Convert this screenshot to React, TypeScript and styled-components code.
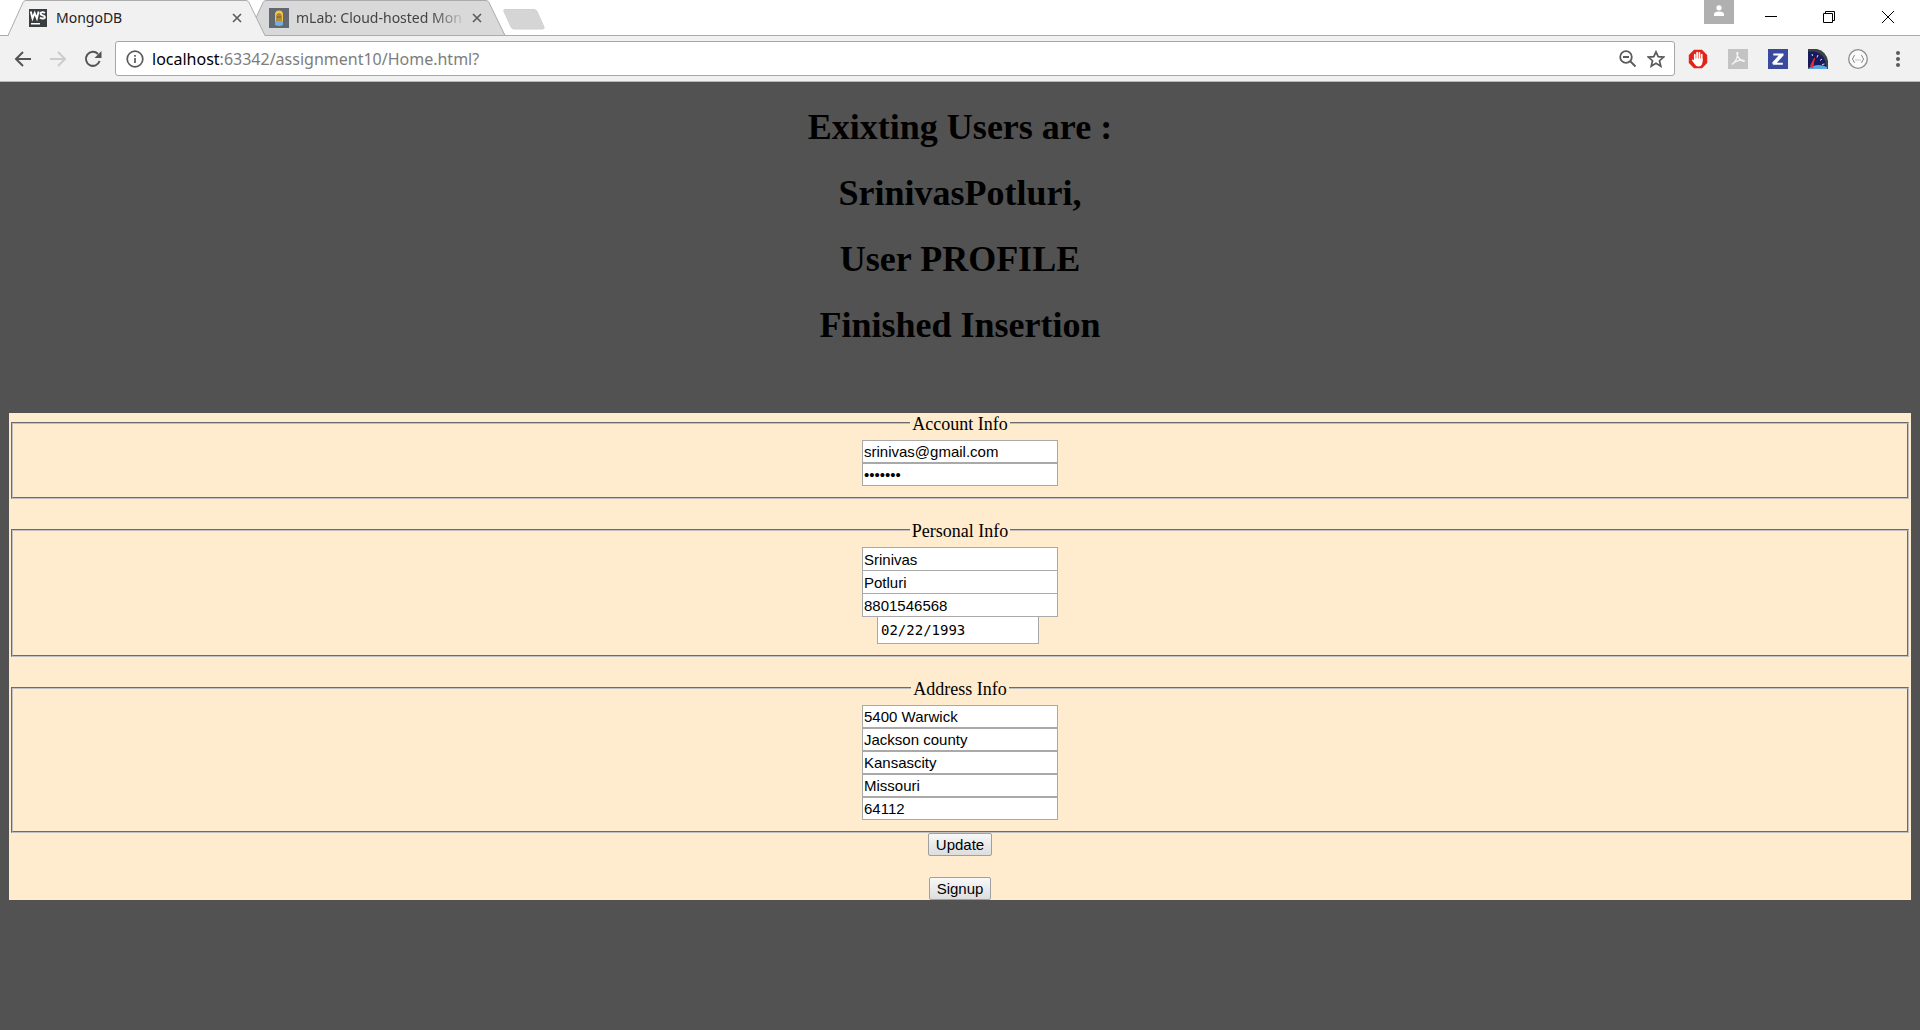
import React from 'react';
import styled, { createGlobalStyle } from 'styled-components';

const ui = '"Noto Sans", "Open Sans", sans-serif';
const sans = '"Liberation Sans", Arial, sans-serif';
const serif = '"Liberation Serif", "Times New Roman", serif';
const mono = '"DejaVu Sans Mono", "Liberation Mono", monospace';

const GlobalStyle = createGlobalStyle`
  *, *::before, *::after { box-sizing: border-box; }
  html, body, #root { height: 100%; }
  body { margin: 0; background: #525252; }
`;

const Window = styled.div`
  display: flex;
  flex-direction: column;
  min-height: 100%;
`;

const TabStrip = styled.header`
  display: flex;
  align-items: flex-start;
  height: 36px;
  padding: 0 2px 0 8px;
  background: #fff;
  border-bottom: 1px solid #ababab;
`;

const Tab = styled.div<{ $active?: boolean }>`
  position: relative;
  z-index: ${p => (p.$active ? 2 : 1)};
  display: flex;
  align-items: center;
  width: 258px;
  height: 36px;
  margin-right: -18px;
  padding: 0 19px 0 21px;
  flex: none;
`;

const TabShape = styled.svg`
  position: absolute;
  inset: 0;
  z-index: -1;
`;

const Favicon = styled.svg`
  flex: none;
  width: 20px;
  height: 20px;
`;

const TabTitle = styled.span<{ $faded?: boolean }>`
  flex: 1;
  min-width: 0;
  overflow: hidden;
  margin-left: 7px;
  font: 14px/20px ${ui};
  color: ${p => (p.$faded ? '#444' : '#222')};
  white-space: nowrap;
  ${p => p.$faded && 'mask-image: linear-gradient(to right, #000 80%, transparent);'}
`;

const IconButton = styled.button<{ $w?: number; $h?: number }>`
  display: flex;
  align-items: center;
  justify-content: center;
  flex: none;
  width: ${p => p.$w ?? 20}px;
  height: ${p => p.$h ?? 20}px;
  padding: 0;
  border: 0;
  background: none;
  color: #5a5a5a;
`;

const NewTab = styled(IconButton)`
  margin: 8px 0 0 14px;
`;

const WindowControls = styled.div`
  display: flex;
  margin-left: auto;
`;

const ProfileButton = styled(IconButton)`
  background: #b0b0b0;
  margin-right: 8px;
`;

const Toolbar = styled.nav`
  display: flex;
  align-items: center;
  height: 46px;
  padding: 0 12px;
  background: #f1f1f1;
  border-bottom: 1px solid #b8b8b8;
`;

const NavButtons = styled.div`
  display: flex;
  gap: 13px;
  margin-right: 11px;
`;

const AddressBar = styled.div`
  display: flex;
  align-items: center;
  flex: 1;
  height: 35px;
  padding: 0 8px 0 9px;
  gap: 8px;
  background: #fff;
  border: 1px solid #a6a6a6;
  border-radius: 3px;
`;

const Url = styled.a`
  flex: 1;
  font: 16px/24px ${ui};
  color: #7d7d7d;
  text-decoration: none;
  white-space: nowrap;
`;

const Host = styled.span`
  color: #000;
`;

const Extensions = styled.div`
  display: flex;
  gap: 20px;
  margin-left: 13px;
`;

const Page = styled.main`
  flex: 1;
  padding: 24px 9px 0;
  font-family: ${serif};
  background: #525252;
`;

const Headings = styled.div`
  display: flex;
  flex-direction: column;
  gap: 24px;
  margin-bottom: 67px;
`;

const Heading = styled.h1`
  margin: 0;
  font: bold 36px/42px ${serif};
  color: #000;
  text-align: center;
`;

const ProfileForm = styled.form`
  display: flex;
  flex-direction: column;
  background: #ffebcd;
`;

const Groups = styled.div`
  display: flex;
  flex-direction: column;
  gap: 21px;
`;

const Group = styled.fieldset`
  min-width: 0;
  margin: 0 2px;
  padding: 7px 12px 11px;
  border: 2px groove #c0c0c0;
`;

const Legend = styled.legend`
  margin: 0 auto;
  padding: 2px 2px 0;
  font: 18px/18px ${serif};
  color: #000;
`;

const Fields = styled.div<{ $joined?: boolean }>`
  display: flex;
  flex-direction: column;
  align-items: center;
  input { height: ${p => (p.$joined ? 24 : 23)}px; }
  input + input { margin-top: ${p => (p.$joined ? -1 : 0)}px; }
`;

const TextField = styled.input`
  width: 196px;
  padding: 1px;
  border: 1px solid #a9a9a9;
  border-radius: 0;
  outline: 0;
  background: #fff;
  color: #000;
  font: 15px/18px ${sans};
`;

const DateField = styled(TextField)`
  && { height: 28px; }
  width: 162px;
  padding-left: 3px;
  margin-right: 4px;
  font: 14px/20px ${mono};
`;

const Actions = styled.div`
  display: flex;
  flex-direction: column;
  align-items: center;
  gap: 21px;
`;

const ActionButton = styled.button`
  height: 23px;
  padding: 0 7px;
  border: 1px solid #a0a0a0;
  border-radius: 2px;
  background: linear-gradient(#f8f8f8, #dddddd);
  color: #000;
  font: 15px/18px ${sans};
`;

function TabBackground({ active }: { active?: boolean }) {
  return (
    <TabShape width="258" height="36" viewBox="0 0 258 36" aria-hidden="true">
      <path
        d="M0 35.5 L15 2.500 Q16 .5 18 .5 H238 Q240 .5 241 2.500 L257 35.500"
        fill={active ? '#f1f1f1' : '#d9d9d9'}
        stroke="#ababab"
      />
      {active && <path d="M1 35.500H256.500" stroke="#f1f1f1" />}
      {!active && <path d="M0 35.500H258" stroke="#ababab" />}
    </TabShape>
  );
}

function CloseGlyph() {
  return (
    <svg width="10" height="10" viewBox="0 0 10 10" fill="none" stroke="currentColor" strokeWidth="1.600">
      <path d="M1 1L9 9M9 1L1 9" />
    </svg>
  );
}

const groups: { title: string; joined?: boolean; fields: { label: string; value: string; kind?: string }[] }[] = [
  {
    title: 'Account Info',
    fields: [
      { label: 'Email', value: 'srinivas@gmail.com' },
      { label: 'Password', value: 'abcdefg', kind: 'password' },
    ],
  },
  {
    title: 'Personal Info',
    joined: true,
    fields: [
      { label: 'First name', value: 'Srinivas' },
      { label: 'Last name', value: 'Potluri' },
      { label: 'Phone', value: '8801546568' },
      { label: 'Birth date', value: '02/22/1993', kind: 'date' },
    ],
  },
  {
    title: 'Address Info',
    fields: [
      { label: 'Street', value: '5400 Warwick' },
      { label: 'County', value: 'Jackson county' },
      { label: 'City', value: 'Kansascity' },
      { label: 'State', value: 'Missouri' },
      { label: 'Zip code', value: '64112' },
    ],
  },
];

const headings = ['Exixting Users are :', 'SrinivasPotluri,', 'User PROFILE', 'Finished Insertion'];

function BrowserTabs() {
  return (
    <TabStrip>
      <Tab $active>
        <TabBackground active />
        <Favicon viewBox="0 0 20 20" aria-hidden="true">
          <rect x="0" y="1" width="18" height="18" fill="#3b3e40" />
          <path d="M1.800 3.500l1.700 7L5.700 5l2.200 5.500L9.600 3.500" fill="none" stroke="#fff" strokeWidth="1.900" />
          <path d="M15.900 5C14.300 3.700 11.500 3.900 11.500 5.700c0 2 4.400 1.200 4.400 3.300 0 2-3.200 2-4.900.5" fill="none" stroke="#fff" strokeWidth="1.900" />
          <rect x="2" y="15" width="9" height="1.500" fill="#fff" />
        </Favicon>
        <TabTitle>MongoDB</TabTitle>
        <IconButton aria-label="Close tab"><CloseGlyph /></IconButton>
      </Tab>
      <Tab>
        <TabBackground />
        <Favicon viewBox="0 0 20 20" aria-hidden="true">
          <rect width="20" height="20" fill="#626871" />
          <path d="M6 14V6.500a4 4 0 0 1 8 0V14z" fill="#f6c344" />
          <path d="M8 13V7.500Q8 6 10 6t2 1.500V13M10 7v6M8 9h4" fill="none" stroke="#6b5a2c" />
          <path d="M6 13h8v4q-4 2-8 0z" fill="#76ace0" />
        </Favicon>
        <TabTitle $faded>mLab: Cloud-hosted Mon</TabTitle>
        <IconButton aria-label="Close tab"><CloseGlyph /></IconButton>
      </Tab>
      <NewTab $w={44} $h={22} aria-label="New tab">
        <svg width="44" height="22" viewBox="0 0 44 22">
          <path d="M3 1.500H32q2 0 3 2L42 19q.7 2-1.500 2H12q-2 0-3-2L2 3.500Q1.200 1.500 3 1.500z" fill="#d5d5d5" stroke="#d0d0d0" />
        </svg>
      </NewTab>
      <WindowControls>
        <ProfileButton $w={30} $h={24} aria-label="Profile">
          <svg width="12" height="14" viewBox="0 4 12 14" fill="#fff">
            <circle cx="6" cy="6.800" r="2.600" />
            <path d="M1 15V13.500Q1 10.500 6 10.500t5 3V15z" />
          </svg>
        </ProfileButton>
        <IconButton $w={58} $h={34} aria-label="Minimize">
          <svg width="12" height="12" viewBox="0 0 12 12" stroke="#000"><path d="M0 5.500H12" /></svg>
        </IconButton>
        <IconButton $w={58} $h={34} aria-label="Restore">
          <svg width="12" height="12" viewBox="0 0 12 12" fill="none" stroke="#000">
            <path d="M.5 2.500H9.500V11.500H.5zM2.500 2.500V.5H11.500V9.500H9.500" />
          </svg>
        </IconButton>
        <IconButton $w={60} $h={34} aria-label="Close">
          <svg width="12" height="12" viewBox="0 0 12 12" stroke="#000"><path d="M0 0L12 12M12 0L0 12" /></svg>
        </IconButton>
      </WindowControls>
    </TabStrip>
  );
}

function BrowserToolbar() {
  return (
    <Toolbar>
      <NavButtons>
        <IconButton $w={22} aria-label="Back">
          <svg width="18" height="16" viewBox="0 0 18 16" fill="none" stroke="#555" strokeWidth="2"><path d="M17 8H2M9 1L2 8L9 15" /></svg>
        </IconButton>
        <IconButton $w={22} aria-label="Forward">
          <svg width="18" height="16" viewBox="0 0 18 16" fill="none" stroke="#ccc" strokeWidth="2"><path d="M1 8H16M9 1L16 8L9 15" /></svg>
        </IconButton>
        <IconButton $w={22} aria-label="Reload">
          <svg width="18" height="18" viewBox="0 0 18 18" fill="none" stroke="#555" strokeWidth="2">
            <path d="M15.600 11A7 7 0 1 1 14 4" />
            <path d="M17.500 1V8H10.500z" fill="#555" stroke="none" />
          </svg>
        </IconButton>
      </NavButtons>
      <AddressBar>
        <IconButton $w={19} aria-label="Site information">
          <svg width="18" height="18" viewBox="0 0 18 18" fill="none" stroke="#5a5a5a" strokeWidth="1.700">
            <circle cx="9" cy="9" r="7.800" /><path d="M9 8V13M9 5V6.800" />
          </svg>
        </IconButton>
        <Url href="#"><Host>localhost</Host>:63342/assignment10/Home.html?</Url>
        <IconButton aria-label="Zoom">
          <svg width="18" height="18" viewBox="0 0 18 18" fill="none" stroke="#5a5a5a" strokeWidth="1.800">
            <circle cx="7" cy="7" r="5.800" /><path d="M4 7H10M11 11L16.500 16.500" />
          </svg>
        </IconButton>
        <IconButton aria-label="Bookmark">
          <svg width="18" height="18" viewBox="0 0 18 18" fill="none" stroke="#5a5a5a" strokeWidth="1.700">
            <path d="M9 1.800L11.200 6.600L16.700 7.100L12.500 10.700L13.800 16.200L9 13.300L4.200 16.200L5.500 10.700L1.300 7.100L6.800 6.600z" />
          </svg>
        </IconButton>
      </AddressBar>
      <Extensions>
        <IconButton aria-label="Ad blocker">
          <svg width="20" height="20" viewBox="0 0 20 20">
            <path d="M6 .8H14L19.200 6V14L14 19.200H6L.8 14V6z" fill="#e2231a" />
            <path d="M6.800 12V5.500M9.100 11V3.500M11.400 11V3.800M13.700 12V5.500" stroke="#fff" strokeWidth="1.700" strokeLinecap="round" />
            <path d="M6 9.500H14.500V12.500Q14.200 17.500 10.500 17.500Q8 17.500 6.600 15L3.800 11.300Q4.800 9.900 6 11.200z" fill="#fff" />
          </svg>
        </IconButton>
        <IconButton aria-label="PDF">
          <svg width="20" height="20" viewBox="0 0 20 20" fill="none">
            <rect width="20" height="20" fill="#c3c3c3" />
            <path d="M4 15.500Q9 12 9.800 4Q9.500 2.500 8.800 4.500Q10 10.500 16 12.500Q17 11 13 11Q8 11.500 4 15.500" stroke="#f4f4f4" strokeWidth="1.300" />
          </svg>
        </IconButton>
        <IconButton aria-label="Z extension">
          <svg width="20" height="20" viewBox="0 0 20 20">
            <rect width="20" height="20" fill="#3a4a9f" />
            <path d="M5.300 5.500H14.500V6L6.800 14.700H14.800M5.300 14.700V14L13 5.500" fill="none" stroke="#fff" strokeWidth="2" />
          </svg>
        </IconButton>
        <IconButton aria-label="Speed meter">
          <svg width="20" height="20" viewBox="0 0 20 20">
            <path d="M0 0H9Q18 2 20 12V20H0z" fill="#3c4245" />
            <path d="M0 2.500H7Q17 5 18.500 18H0z" fill="#171a5c" />
            <path d="M0 20Q9 13 19 18V20z" fill="#59a5e6" />
            <path d="M4 5L4.500 7M10 6L9 8.500M14 10L12 11.500M16.500 15L14 15.500" stroke="#dde" />
            <path d="M4.500 19L6.500 9L2.500 17z" fill="#f02c2c" stroke="#f02c2c" />
          </svg>
        </IconButton>
        <IconButton aria-label="JSON viewer">
          <svg width="20" height="20" viewBox="0 0 20 20" fill="none" stroke="#8c8c8c">
            <circle cx="10" cy="10" r="9.300" fill="#fafafa" strokeWidth="1.300" />
            <path d="M7 6.500Q5.500 6.500 5.500 8T4 10Q5.500 10.500 5.500 12T7 13.500M13 6.500Q14.500 6.500 14.500 8T16 10Q14.500 10.500 14.500 12T13 13.500" />
            <path d="M7.500 11H12.500" strokeDasharray="1 1" />
          </svg>
        </IconButton>
        <IconButton aria-label="Menu">
          <svg width="4" height="18" viewBox="0 0 4 18" fill="#5a5a5a">
            <circle cx="2" cy="3" r="2" /><circle cx="2" cy="9" r="2" /><circle cx="2" cy="15" r="2" />
          </svg>
        </IconButton>
      </Extensions>
    </Toolbar>
  );
}

export default function App() {
  return (
    <Window>
      <GlobalStyle />
      <BrowserTabs />
      <BrowserToolbar />
      <Page>
        <Headings>
          {headings.map(text => <Heading key={text}>{text}</Heading>)}
        </Headings>
        <ProfileForm onSubmit={e => e.preventDefault()}>
          <Groups>
            {groups.map(group => (
              <Group key={group.title}>
                <Legend>{group.title}</Legend>
                <Fields $joined={group.joined}>
                  {group.fields.map(field =>
                    field.kind === 'date' ? (
                      <DateField key={field.label} aria-label={field.label} defaultValue={field.value} />
                    ) : (
                      <TextField
                        key={field.label}
                        type={field.kind ?? 'text'}
                        aria-label={field.label}
                        defaultValue={field.value}
                      />
                    ),
                  )}
                </Fields>
              </Group>
            ))}
          </Groups>
          <Actions>
            <ActionButton type="submit">Update</ActionButton>
            <ActionButton type="button">Signup</ActionButton>
          </Actions>
        </ProfileForm>
      </Page>
    </Window>
  );
}
